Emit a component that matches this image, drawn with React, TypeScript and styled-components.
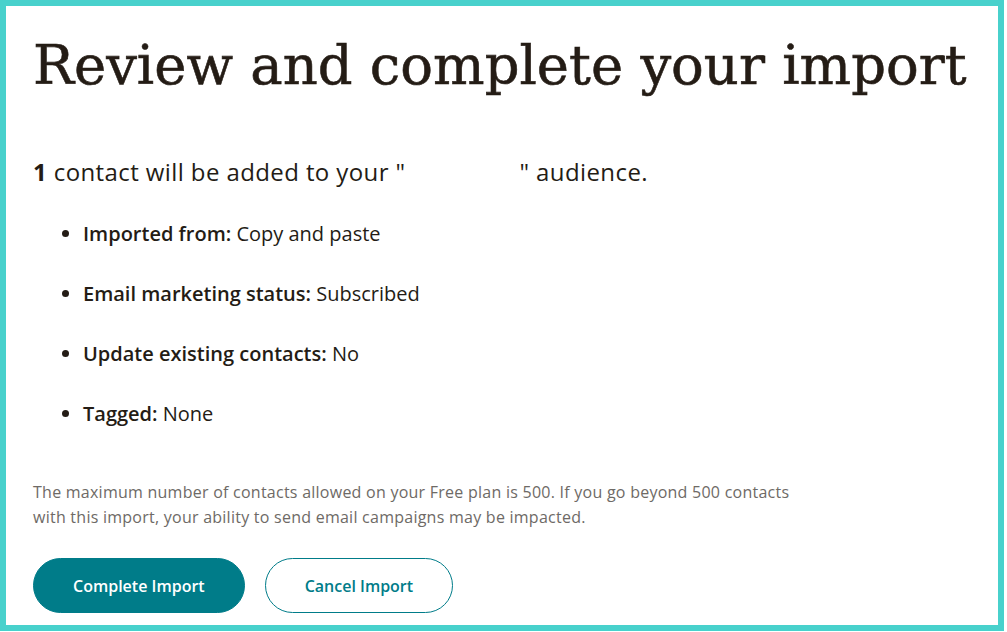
import React from "react";
import styled, { createGlobalStyle } from "styled-components";

const GlobalStyle = createGlobalStyle`
  html, body {
    margin: 0;
    padding: 0;
    background: #ffffff;
  }
  body {
    font-family: "Open Sans", "Liberation Sans", sans-serif;
    color: #241c15;
  }
`;

const Frame = styled.div`
  box-sizing: border-box;
  width: 1004px;
  height: 631px;
  border: 6px solid #48d1cc;
  padding: 22px 27px 0 27px;
  overflow: hidden;
`;

const Title = styled.h1`
  margin: 0;
  font-family: "DejaVu Serif", "Liberation Serif", serif;
  font-weight: 400;
  font-size: 54.4px;
  line-height: 76px;
  white-space: nowrap;
  color: #241c15;
  -webkit-text-stroke: 0.6px #241c15;
`;

const Summary = styled.p`
  margin: 52px 0 0 0;
  font-size: 24px;
  line-height: 32px;
  letter-spacing: 0.4px;
  color: #241c15;

  strong {
    font-weight: 700;
  }
`;

const Blank = styled.span`
  display: inline-block;
  width: 114px;
`;

const Details = styled.ul`
  margin: 32px 0 0 0;
  padding: 0 0 0 50px;
  display: flex;
  flex-direction: column;
  gap: 32px;
`;

const Detail = styled.li`
  font-size: 20px;
  line-height: 28px;
  color: #241c15;

  b {
    font-weight: 600;
  }
`;

const Note = styled.p`
  margin: 52px 0 0 0;
  max-width: 780px;
  font-size: 16px;
  line-height: 25px;
  letter-spacing: 0.25px;
  color: #6e6a66;
`;

const Actions = styled.div`
  display: flex;
  gap: 20px;
  margin-top: 28px;
`;

const PillButton = styled.button<{ $primary?: boolean }>`
  box-sizing: border-box;
  height: 55px;
  padding: 0 39px;
  border-radius: 28px;
  border: 1px solid #007c89;
  background: ${(p) => (p.$primary ? "#007c89" : "#ffffff")};
  color: ${(p) => (p.$primary ? "#ffffff" : "#007c89")};
  font-family: "Open Sans", "Liberation Sans", sans-serif;
  font-size: 16px;
  font-weight: 600;
  cursor: pointer;
`;

const details = [
  { label: "Imported from:", value: "Copy and paste" },
  { label: "Email marketing status:", value: "Subscribed" },
  { label: "Update existing contacts:", value: "No" },
  { label: "Tagged:", value: "None" },
];

const App: React.FC = () => {
  return (
    <>
      <GlobalStyle />
      <Frame>
        <Title>Review and complete your import</Title>
        <Summary>
          <strong>1</strong> contact will be added to your "<Blank />" audience.
        </Summary>
        <Details>
          {details.map((d) => (
            <Detail key={d.label}>
              <b>{d.label}</b> {d.value}
            </Detail>
          ))}
        </Details>
        <Note>
          The maximum number of contacts allowed on your Free plan is 500. If you go beyond 500 contacts
          with this import, your ability to send email campaigns may be impacted.
        </Note>
        <Actions>
          <PillButton $primary>Complete Import</PillButton>
          <PillButton>Cancel Import</PillButton>
        </Actions>
      </Frame>
    </>
  );
};

export default App;
